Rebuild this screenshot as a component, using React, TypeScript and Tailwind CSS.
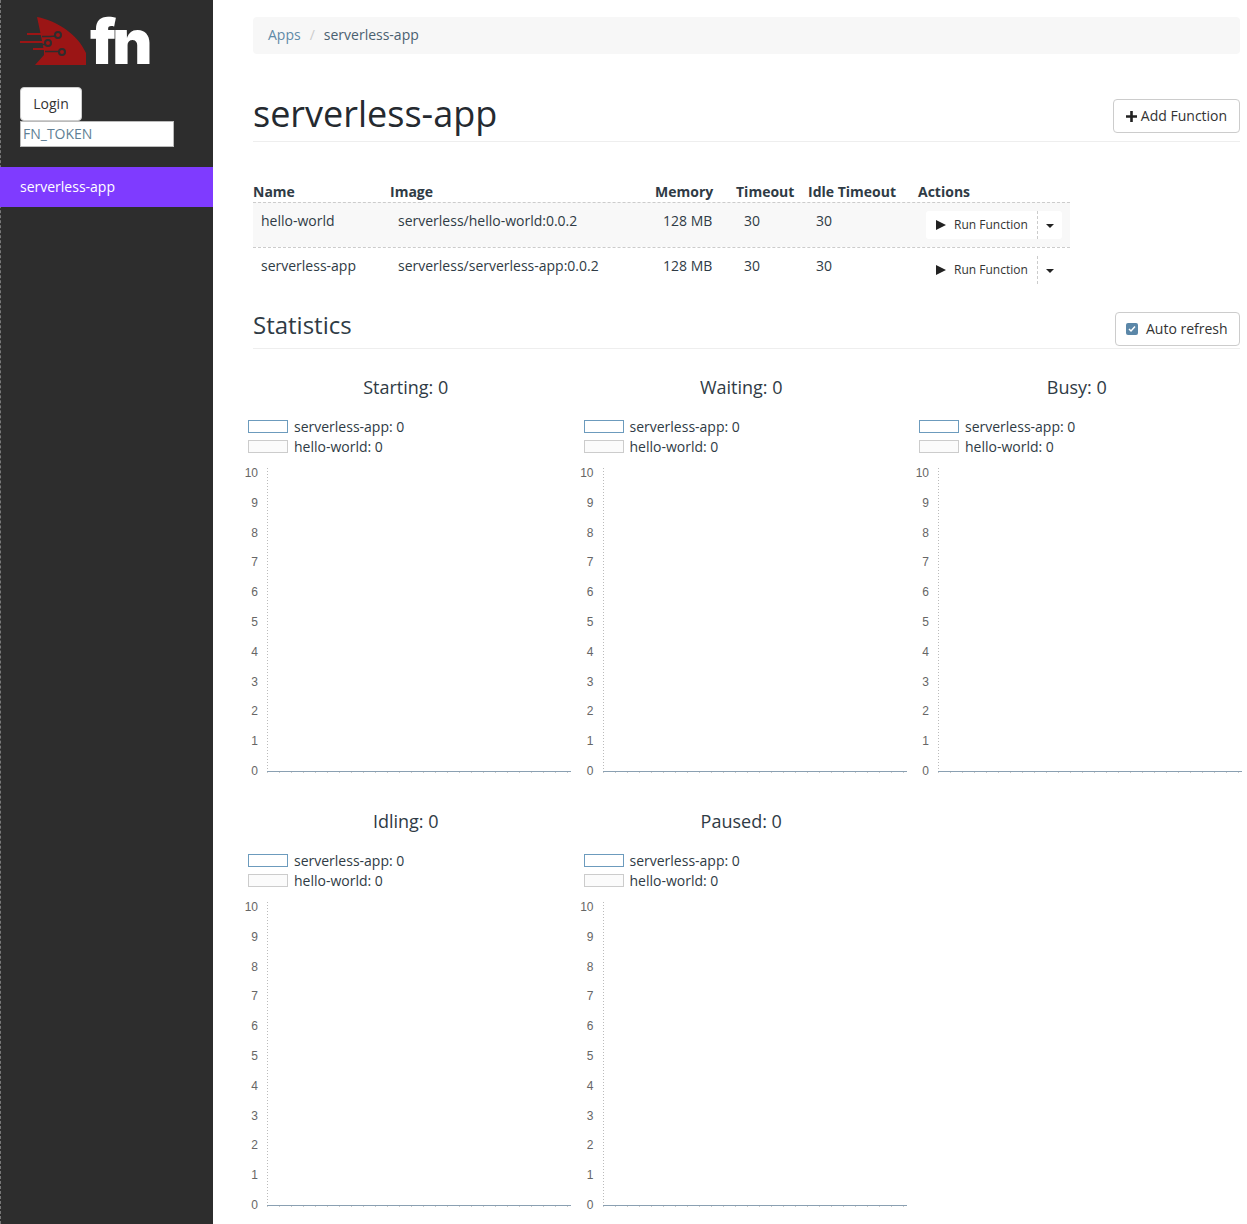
const FONT = "font-['Open_Sans',sans-serif]";

const apps = [
  { name: 'hello-world', image: 'serverless/hello-world:0.0.2', shaded: true },
  { name: 'serverless-app', image: 'serverless/serverless-app:0.0.2', shaded: false },
];

const FnLogo = () => (
  <div className="flex h-[50px] items-end">
    <svg width="68" height="50" viewBox="0 0 68 50" className="shrink-0">
      <path d="M17 0C38 4 58 18 66 36V48H15L24 38V34L20 14Z" fill="#9b1515" />
      <g stroke="#9b1515" strokeWidth="2" fill="none">
        <path d="M7 17H30" />
        <path d="M0 25H28" />
        <path d="M13 32H32" />
      </g>
      <g stroke="#2d2d2d" strokeWidth="1.5" fill="none">
        <path d="M22 19.5H30L36 19" />
        <path d="M19 27.5H26" />
        <path d="M25 34.5H39" />
      </g>
      <g stroke="#2d2d2d" strokeWidth="2" fill="#9b1515">
        <circle cx="38" cy="18" r="3" />
        <circle cx="28" cy="26" r="3" />
        <circle cx="42" cy="35" r="3" />
      </g>
    </svg>
    <span className="ml-[2px] font-['Inter',sans-serif] text-[62px] leading-[50px] font-black tracking-[-4px] text-white">
      fn
    </span>
  </div>
);

const Sidebar = () => (
  <aside className="flex w-[213px] shrink-0 flex-col border-l border-dashed border-l-[#777] bg-[#2d2d2d] pt-[17px]">
    <div className="pl-[19px]">
      <FnLogo />
      <button className="mt-[20px] block h-[34px] w-[62px] rounded-[4px] border border-[#ccc] bg-white pb-[2px] text-[14px] text-[#333]">
        Login
      </button>
      <input
        readOnly
        value="FN_TOKEN"
        className="block h-[26px] w-[154px] border border-[#bbb] bg-white px-[2px] pb-[2px] text-[14px] text-[#5f7f95] outline-none"
      />
    </div>
    <div className="mt-[20px] -ml-px flex h-[40px] items-center bg-[#7f3bff] pb-[2px] pl-[20px] text-[14px] text-white">
      serverless-app
    </div>
  </aside>
);

const RunButton = ({ shaded }: { shaded: boolean }) => (
  <div className={`flex h-[28px] w-[136px] items-center rounded-[3px] pl-[10px] ${shaded ? 'bg-white' : ''}`}>
    <svg width="10" height="10" viewBox="0 0 10 10" className="shrink-0">
      <path d="M0 0L10 5L0 10Z" fill="#222" />
    </svg>
    <span className="ml-[8px] text-[12px] text-[#333]">Run Function</span>
    <div className="ml-[9px] flex h-[28px] flex-1 items-center justify-center border-l border-dashed border-l-[#ccc]">
      <svg width="8" height="4" viewBox="0 0 8 4" className="mt-[2px]">
        <path d="M0 0H8L4 4Z" fill="#222" />
      </svg>
    </div>
  </div>
);

const FunctionsTable = () => (
  <div className="mt-[38px] w-[817px] text-[14px] text-[#2f3b45]">
    <div className="flex h-[22px] items-center font-bold">
      <div className="w-[137px]">Name</div>
      <div className="w-[265px]">Image</div>
      <div className="w-[81px]">Memory</div>
      <div className="w-[72px]">Timeout</div>
      <div className="w-[110px]">Idle Timeout</div>
      <div>Actions</div>
    </div>
    {apps.map((app) => (
      <div
        key={app.name}
        className={`flex h-[45px] border-t border-dashed border-t-[#ccc] pt-[7px] pl-[8px] ${app.shaded ? 'bg-[#f8f8f8]' : ''}`}
      >
        <div className="w-[137px]">{app.name}</div>
        <div className="w-[265px]">{app.image}</div>
        <div className="w-[81px]">128 MB</div>
        <div className="w-[72px]">30</div>
        <div className="w-[110px]">30</div>
        <div className="mt-[1px]">
          <RunButton shaded={app.shaded} />
        </div>
      </div>
    ))}
  </div>
);

const ticks = [10, 9, 8, 7, 6, 5, 4, 3, 2, 1, 0];

const LegendRow = ({ label, color, fill }: { label: string; color: string; fill: string }) => (
  <div className="flex h-[20px] items-center">
    <div className={`h-[13px] w-[40px] border ${color} ${fill}`} />
    <span className="ml-[6px] text-[14px] text-[#2f3b45]">{label}</span>
  </div>
);

const Chart = ({ title }: { title: string }) => (
  <div className="flex h-[434px] flex-col">
    <div className="h-[24px] text-center text-[18px] leading-[24px] text-[#2f3b45]">{title}</div>
    <div className="mt-[17px] pl-[10px]">
      <LegendRow label="serverless-app: 0" color="border-[#6c9bbd]" fill="bg-white" />
      <LegendRow label="hello-world: 0" color="border-[#ccc]" fill="bg-[#fbfbfb]" />
    </div>
    <div className="mt-[10px] flex">
      <div className="flex h-[312px] w-[20px] flex-col justify-between text-right font-['Liberation_Sans',sans-serif] text-[12px] leading-[14px] text-[#666]">
        {ticks.map((t) => (
          <div key={t}>{t}</div>
        ))}
      </div>
      <svg width="304" height="306" viewBox="0 0 304 306" className="mt-[2px] ml-[9px] shrink-0">
        <path d="M0.5 0V303" stroke="#bbb" strokeDasharray="1 2" fill="none" />
        <path d="M0 303.5H304" stroke="#8aa0b2" fill="none" />
        <path d="M0 304.5H304" stroke="#ccc" strokeDasharray="1 11" fill="none" />
      </svg>
    </div>
  </div>
);

const Statistics = () => (
  <div>
    <div className="mt-[20px] flex h-[37px] items-start justify-between border-b border-[#eee]">
      <h2 className="text-[24px] leading-[26px] text-[#2f3b45]">Statistics</h2>
      <button className="flex h-[34px] w-[125px] items-center rounded-[4px] border border-[#ccc] bg-white pb-[2px] pl-[10px] text-[14px] text-[#333]">
        <span className="mt-[2px] flex h-[12px] w-[12px] items-center justify-center rounded-[2px] bg-[#5b87a8]">
          <svg width="8" height="8" viewBox="0 0 8 8">
            <path d="M1 4L3 6L7 1.5" stroke="#fff" strokeWidth="1.5" fill="none" />
          </svg>
        </span>
        <span className="ml-[8px]">Auto refresh</span>
      </button>
    </div>
    <div className="mt-[26px] -ml-[15px] grid w-[1006.5px] grid-cols-3">
      {['Starting: 0', 'Waiting: 0', 'Busy: 0', 'Idling: 0', 'Paused: 0'].map((title) => (
        <Chart key={title} title={title} />
      ))}
    </div>
  </div>
);

export default function App() {
  return (
    <div className={`flex h-[1224px] overflow-hidden bg-white ${FONT}`}>
      <Sidebar />
      <main className="min-w-0 flex-1 pt-[17px] pr-[7px] pl-[40px]">
        <div className="flex h-[37px] items-center rounded-[4px] bg-[#f7f7f7] pb-[2px] pl-[15px] text-[14px]">
          <span className="text-[#5f8aa8]">Apps</span>
          <span className="mx-[9px] text-[#ccc]">/</span>
          <span className="text-[#4a6070]">serverless-app</span>
        </div>
        <div className="mt-[35px] flex h-[53px] items-start justify-between border-b border-[#eee]">
          <h1 className="text-[36px] leading-[50px] text-[#252a30]">serverless-app</h1>
          <button className="mt-[10px] flex h-[34px] w-[127px] items-center justify-center rounded-[4px] border border-[#ccc] bg-white pb-[2px] text-[14px] text-[#333]">
            <svg width="11" height="11" viewBox="0 0 11 11" className="mt-[2px] mr-[4px]">
              <path d="M5.5 0V11M0 5.5H11" stroke="#222" strokeWidth="2.6" />
            </svg>
            Add Function
          </button>
        </div>
        <FunctionsTable />
        <Statistics />
      </main>
    </div>
  );
}
